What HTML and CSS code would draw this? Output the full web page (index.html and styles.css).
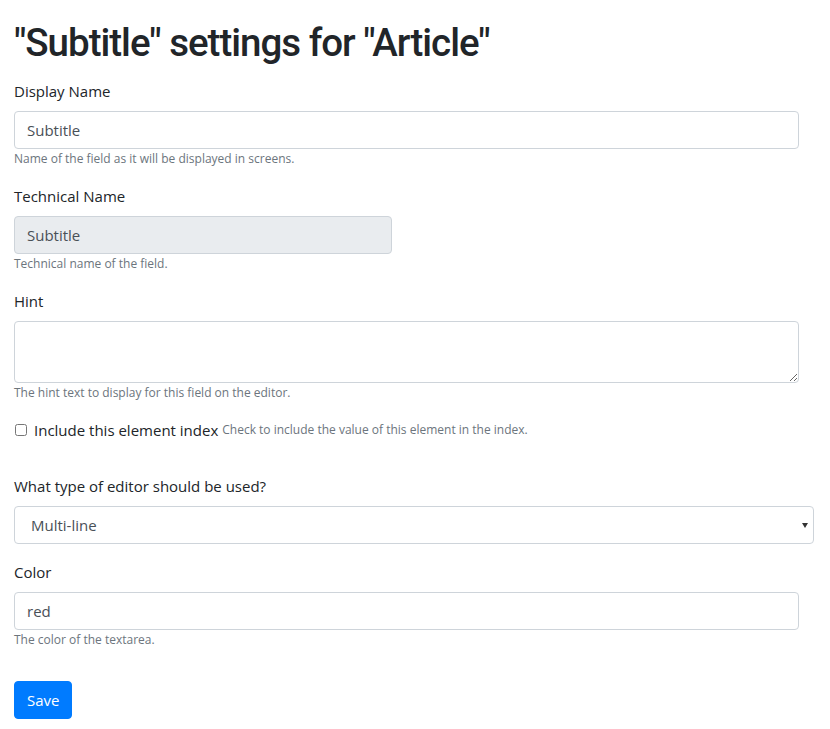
FILE: index.html
```html
<!DOCTYPE html>
<html>
<head>
<meta charset="utf-8">
<link rel="stylesheet" href="styles.css">
</head>
<body>
<div class="page">
  <h1 class="title">"Subtitle" settings for "Article"</h1>
  <form class="form">
    <div class="group">
      <label class="label">Display Name</label>
      <input class="control" type="text" value="Subtitle">
      <span class="help">Name of the field as it will be displayed in screens.</span>
    </div>
    <div class="group">
      <label class="label">Technical Name</label>
      <input class="control control-half" type="text" value="Subtitle" disabled>
      <span class="help">Technical name of the field.</span>
    </div>
    <div class="group">
      <label class="label">Hint</label>
      <textarea class="control control-area"></textarea>
      <span class="help">The hint text to display for this field on the editor.</span>
    </div>
    <div class="group group-check">
      <label class="check">
        <input type="checkbox" class="check-box">
        <span class="check-label">Include this element index</span>
        <span class="check-help">Check to include the value of this element in the index.</span>
      </label>
    </div>
    <div class="group">
      <label class="label">What type of editor should be used?</label>
      <div class="select-wrap">
        <select class="control control-select">
          <option>Multi-line</option>
        </select>
      </div>
    </div>
    <div class="group group-last">
      <label class="label">Color</label>
      <input class="control" type="text" value="red">
      <span class="help">The color of the textarea.</span>
    </div>
    <button type="button" class="btn">Save</button>
  </form>
</div>
</body>
</html>
```

FILE: styles.css
```css
* { box-sizing: border-box; }
html, body { margin: 0; padding: 0; background: #fff; }
body {
  font-family: "Open Sans", "Noto Sans", sans-serif;
  font-size: 15px;
  line-height: 24px;
  color: #212529;
}
.page {
  padding: 16px 16px 0 14px;
}
.title {
  margin: 0 0 8px 0;
  font-family: Roboto, "Open Sans", sans-serif;
  font-size: 38.5px;
  line-height: 54px;
  padding-bottom: 1px;
  font-weight: 500;
  letter-spacing: -1px;
}
.form { display: flex; flex-direction: column; align-items: flex-start; }
.group {
  display: flex;
  flex-direction: column;
  align-self: stretch;
  margin-bottom: 16px;
  padding-right: 15px;
}
.label {
  display: block;
  margin-bottom: 8px;
  line-height: 24px;
}
.control {
  display: block;
  width: 100%;
  height: 38px;
  padding: 6px 12px;
  font-family: inherit;
  font-size: 15px;
  line-height: 24px;
  color: #495057;
  background: #fff;
  border: 1px solid #ced4da;
  border-radius: 4px;
  outline: none;
}
.control:disabled { background: #e9ecef; color: #495057; opacity: 1; }
.control-half { width: 378px; }
.control-area { height: 62px; resize: vertical; }
.help {
  display: block;
  font-size: 12px;
  line-height: 19px;
  color: #6c757d;
}
.group-check { margin-bottom: 32px; }
.check {
  display: flex;
  align-items: center;
  line-height: 24px;
}
.check-box {
  margin: 0 7px 0 1px;
  width: 12px;
  height: 12px;
}
.check-label { font-size: 15px; margin-right: 4px; }
.check-help { font-size: 12px; color: #6c757d; }
.select-wrap {
  position: relative;
  margin-right: -15px;
}
.control-select {
  appearance: none;
  -webkit-appearance: none;
  padding-left: 16px;
  color: #495057;
}
.select-wrap::after {
  content: "";
  position: absolute;
  right: 6px;
  top: 17px;
  border-left: 3.5px solid transparent;
  border-right: 3.5px solid transparent;
  border-top: 5px solid #333;
  pointer-events: none;
}
.group-last { margin-bottom: 32px; }
.btn {
  height: 38px;
  padding: 6px 12px;
  font-family: inherit;
  font-size: 15px;
  line-height: 24px;
  color: #fff;
  background: #007bff;
  border: 1px solid #007bff;
  border-radius: 4px;
}
```
